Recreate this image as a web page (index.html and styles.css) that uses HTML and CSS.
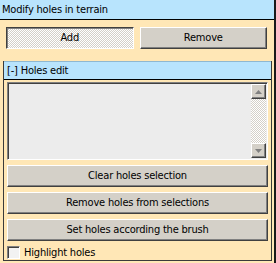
FILE: index.html
```html
<!DOCTYPE html>
<html>
<head>
<meta charset="utf-8">
<link rel="stylesheet" href="styles.css">
</head>
<body>
<div class="panel">
  <div class="title">Modify holes in terrain</div>
  <div class="mode-row">
    <div class="btn pressed">Add</div>
    <div class="btn">Remove</div>
  </div>
  <div class="section">
    <div class="section-title">[-] Holes edit</div>
    <div class="section-body">
      <div class="listbox">
        <div class="list-area"></div>
        <div class="scrollbar">
          <div class="sb-btn"><svg width="7" height="4" viewBox="0 0 7 4"><path d="M3.5 0 L7 4 L0 4 Z" fill="#808080"/></svg></div>
          <div class="sb-track"></div>
          <div class="sb-btn"><svg width="7" height="4" viewBox="0 0 7 4"><path d="M0 0 L7 0 L3.5 4 Z" fill="#808080"/></svg></div>
        </div>
      </div>
      <div class="btn wide">Clear holes selection</div>
      <div class="btn wide">Remove holes from selections</div>
      <div class="btn wide">Set holes according the brush</div>
      <label class="check"><span class="box"></span>Highlight holes</label>
    </div>
  </div>
</div>
</body>
</html>
```

FILE: styles.css
```css
html, body {
  margin: 0;
  padding: 0;
  background: #ffe7b6;
}
.panel {
  width: 274px;
  height: 263px;
  background: #ffe7b6;
  border-right: 2px solid #1a1a1a;
  box-sizing: content-box;
  font-family: "DejaVu Sans Condensed", "DejaVu Sans", sans-serif;
  font-stretch: condensed;
  font-size: 11px;
  letter-spacing: -0.2px;
  color: #000;
  display: flex;
  flex-direction: column;
}
.title {
  height: 19px;
  line-height: 20px;
  background: #b8e4fd;
  border-bottom: 1px solid #000;
  padding-left: 2px;
}
.mode-row {
  display: flex;
  gap: 6px;
  padding: 7px 7px 0 6px;
  height: 22px;
}
.btn {
  box-sizing: border-box;
  height: 22px;
  line-height: 20px;
  text-align: center;
  background: #d4d0c8;
  border: 1px solid;
  border-color: #ffffff #404040 #404040 #ffffff;
  box-shadow: inset -1px -1px 0 #808080;
}
.mode-row .btn {
  flex: 1;
}
.btn.pressed {
  border-color: #404040 #ffffff #ffffff #404040;
  box-shadow: inset 1px 1px 0 #808080;
  background: repeating-conic-gradient(#ffffff 0 25%, #d4d0c8 0 50%) 0 0 / 2px 2px;
}
.section {
  margin: 12px 2px 2px 3px;
  flex: 1;
  border-left: 1px solid #3a3a3a;
  border-right: 1px solid #3a3a3a;
  border-bottom: 1px solid #3a3a3a;
  display: flex;
  flex-direction: column;
}
.section-title {
  height: 17px;
  line-height: 18px;
  background: #b8e4fd;
  border-bottom: 1px solid #000;
  border-top: 1px solid #8fb8d0;
  padding-left: 3px;
}
.section-body {
  padding: 2px 3px 0 3px;
  display: flex;
  flex-direction: column;
  gap: 5px;
}
.listbox {
  height: 78px;
  box-sizing: border-box;
  display: flex;
  background: #ececec;
  border: 1px solid;
  border-color: #808080 #ffffff #ffffff #808080;
  box-shadow: inset 1px 1px 0 #404040;
  padding: 1px;
}
.list-area {
  flex: 1;
}
.scrollbar {
  width: 15px;
  display: flex;
  flex-direction: column;
}
.sb-btn {
  box-sizing: border-box;
  height: 15px;
  background: #d4d0c8;
  border: 1px solid;
  border-color: #ffffff #404040 #404040 #ffffff;
  box-shadow: inset -1px -1px 0 #808080;
  display: flex;
  align-items: center;
  justify-content: center;
}
.sb-track {
  flex: 1;
  background: repeating-conic-gradient(#ffffff 0 25%, #d4d0c8 0 50%) 0 0 / 2px 2px;
}
.wide {
  width: 100%;
}
.check {
  display: flex;
  align-items: center;
  gap: 4px;
  height: 14px;
  margin-top: -1px;
}
.box {
  width: 13px;
  height: 13px;
  box-sizing: border-box;
  background: #f2f2f2;
  border: 1px solid;
  border-color: #808080 #ffffff #ffffff #808080;
  box-shadow: inset 1px 1px 0 #404040;
}
```
